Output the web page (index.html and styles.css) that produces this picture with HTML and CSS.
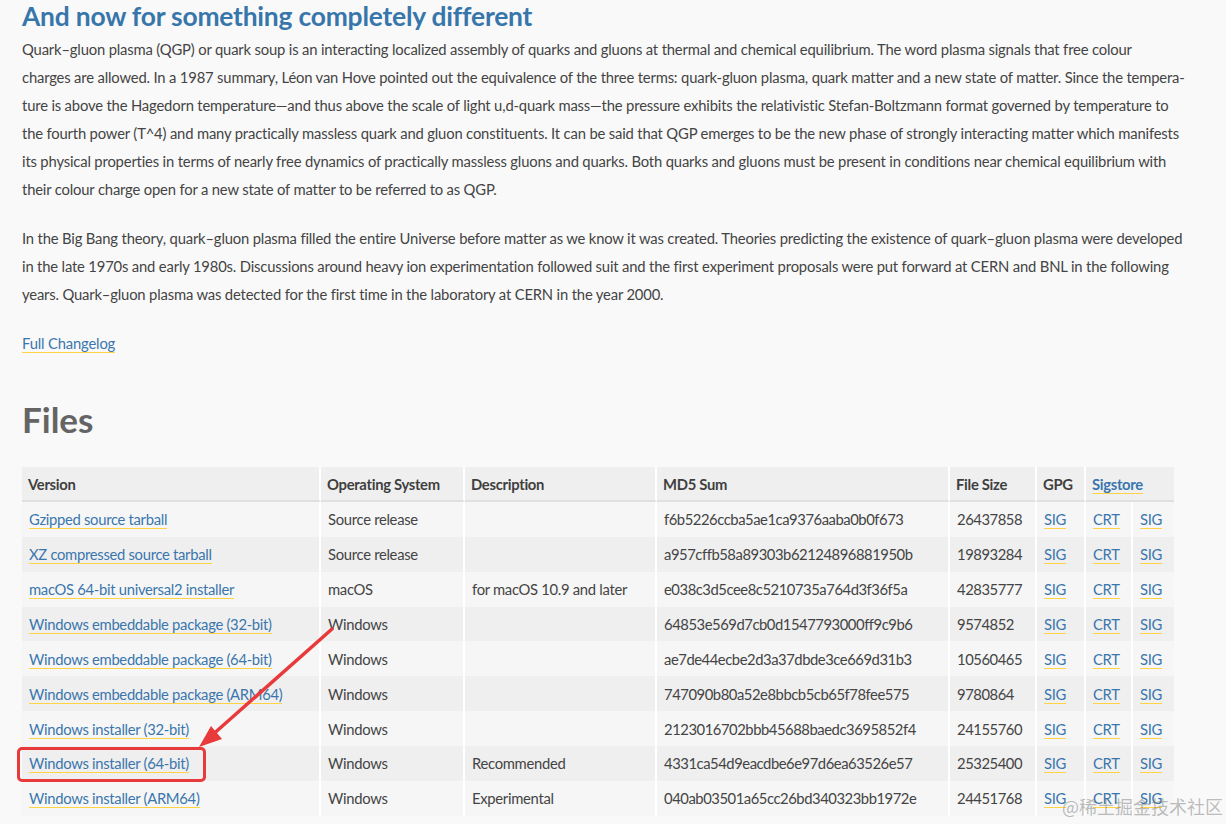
FILE: index.html
```html
<!DOCTYPE html>
<html lang="en">
<head>
<meta charset="utf-8">
<title>Files</title>
<link rel="stylesheet" href="styles.css">
</head>
<body>
<main class="page">
  <h2 class="title">And now for something completely different</h2>
  <p class="text">Quark–gluon plasma (QGP) or quark soup is an interacting localized assembly of quarks and gluons at thermal and chemical equilibrium. The word plasma signals that free colour<br>charges are allowed. In a 1987 summary, Léon van Hove pointed out the equivalence of the three terms: quark-gluon plasma, quark matter and a new state of matter. Since the tempera-<br>ture is above the Hagedorn temperature—and thus above the scale of light u,d-quark mass—the pressure exhibits the relativistic Stefan-Boltzmann format governed by temperature to<br>the fourth power (T^4) and many practically massless quark and gluon constituents. It can be said that QGP emerges to be the new phase of strongly interacting matter which manifests<br>its physical properties in terms of nearly free dynamics of practically massless gluons and quarks. Both quarks and gluons must be present in conditions near chemical equilibrium with<br>their colour charge open for a new state of matter to be referred to as QGP.</p>
  <p class="text">In the Big Bang theory, quark–gluon plasma filled the entire Universe before matter as we know it was created. Theories predicting the existence of quark–gluon plasma were developed<br>in the late 1970s and early 1980s. Discussions around heavy ion experimentation followed suit and the first experiment proposals were put forward at CERN and BNL in the following<br>years. Quark–gluon plasma was detected for the first time in the laboratory at CERN in the year 2000.</p>
  <p class="text"><a class="link" href="#">Full Changelog</a></p>

  <h1 class="files-title">Files</h1>

  <table class="files">
    <colgroup>
      <col class="c-version"><col class="c-os"><col class="c-desc"><col class="c-md5"><col class="c-size"><col class="c-gpg"><col class="c-crt"><col class="c-sig">
    </colgroup>
    <thead>
      <tr><th>Version</th><th>Operating System</th><th>Description</th><th>MD5 Sum</th><th>File Size</th><th>GPG</th><th colspan="2"><a class="link" href="#">Sigstore</a></th></tr>
    </thead>
    <tbody>
      <tr><td><a class="link" href="#">Gzipped source tarball</a></td><td>Source release</td><td></td><td class="mono">f6b5226ccba5ae1ca9376aaba0b0f673</td><td class="mono">26437858</td><td><a class="link" href="#">SIG</a></td><td><a class="link" href="#">CRT</a></td><td><a class="link" href="#">SIG</a></td></tr>
      <tr><td><a class="link" href="#">XZ compressed source tarball</a></td><td>Source release</td><td></td><td class="mono">a957cffb58a89303b62124896881950b</td><td class="mono">19893284</td><td><a class="link" href="#">SIG</a></td><td><a class="link" href="#">CRT</a></td><td><a class="link" href="#">SIG</a></td></tr>
      <tr><td><a class="link" href="#">macOS 64-bit universal2 installer</a></td><td>macOS</td><td>for macOS 10.9 and later</td><td class="mono">e038c3d5cee8c5210735a764d3f36f5a</td><td class="mono">42835777</td><td><a class="link" href="#">SIG</a></td><td><a class="link" href="#">CRT</a></td><td><a class="link" href="#">SIG</a></td></tr>
      <tr><td><a class="link" href="#">Windows embeddable package (32-bit)</a></td><td>Windows</td><td></td><td class="mono">64853e569d7cb0d1547793000ff9c9b6</td><td class="mono">9574852</td><td><a class="link" href="#">SIG</a></td><td><a class="link" href="#">CRT</a></td><td><a class="link" href="#">SIG</a></td></tr>
      <tr><td><a class="link" href="#">Windows embeddable package (64-bit)</a></td><td>Windows</td><td></td><td class="mono">ae7de44ecbe2d3a37dbde3ce669d31b3</td><td class="mono">10560465</td><td><a class="link" href="#">SIG</a></td><td><a class="link" href="#">CRT</a></td><td><a class="link" href="#">SIG</a></td></tr>
      <tr><td><a class="link" href="#">Windows embeddable package (ARM64)</a></td><td>Windows</td><td></td><td class="mono">747090b80a52e8bbcb5cb65f78fee575</td><td class="mono">9780864</td><td><a class="link" href="#">SIG</a></td><td><a class="link" href="#">CRT</a></td><td><a class="link" href="#">SIG</a></td></tr>
      <tr><td><a class="link" href="#">Windows installer (32-bit)</a></td><td>Windows</td><td></td><td class="mono">2123016702bbb45688baedc3695852f4</td><td class="mono">24155760</td><td><a class="link" href="#">SIG</a></td><td><a class="link" href="#">CRT</a></td><td><a class="link" href="#">SIG</a></td></tr>
      <tr><td><a class="link" href="#">Windows installer (64-bit)</a></td><td>Windows</td><td>Recommended</td><td class="mono">4331ca54d9eacdbe6e97d6ea63526e57</td><td class="mono">25325400</td><td><a class="link" href="#">SIG</a></td><td><a class="link" href="#">CRT</a></td><td><a class="link" href="#">SIG</a></td></tr>
      <tr><td><a class="link" href="#">Windows installer (ARM64)</a></td><td>Windows</td><td>Experimental</td><td class="mono">040ab03501a65cc26bd340323bb1972e</td><td class="mono">24451768</td><td><a class="link" href="#">SIG</a></td><td><a class="link" href="#">CRT</a></td><td><a class="link" href="#">SIG</a></td></tr>
    </tbody>
  </table>
</main>

<div class="highlight-box"></div>
<svg class="arrow" width="1226" height="824" viewBox="0 0 1226 824" aria-hidden="true">
  <line x1="332" y1="629" x2="210" y2="737" stroke="#e8393b" stroke-width="3.5" stroke-linecap="round"/>
  <polygon points="199,747 211,726 222,739" fill="#e8393b"/>
</svg>
<div class="watermark">@稀土掘金技术社区</div>
</body>
</html>
```

FILE: styles.css
```css
html, body {
  margin: 0;
  padding: 0;
}
body {
  background: #f9f9f9;
  color: #444;
  font-family: Lato, "Noto Sans", sans-serif;
  width: 1226px;
  height: 824px;
  overflow: hidden;
  position: relative;
}
.page {
  padding-left: 22px;
}
.title {
  margin: 0 0 3px;
  font-size: 26.4px;
  line-height: 32px;
  font-weight: 700;
  color: #3776ab;
  letter-spacing: -0.2px;
}
.text {
  margin: 0 0 21px;
  font-size: 14.8px;
  line-height: 28px;
  white-space: nowrap;
  letter-spacing: -0.17px;
}
.link {
  color: #3a76ad;
  text-decoration: none;
  border-bottom: 1px solid #ffd343;
}
.files-title {
  margin: 38px 0 24px;
  font-size: 35px;
  line-height: 48px;
  font-weight: 700;
  color: #646464;
}
.files {
  border-collapse: separate;
  border-spacing: 0;
  table-layout: fixed;
  width: 1152px;
  font-size: 14.8px;
  letter-spacing: -0.3px;
}
.c-version { width: 299px; }
.c-os { width: 144px; }
.c-desc { width: 192px; }
.c-md5 { width: 293px; }
.c-size { width: 87px; }
.c-gpg { width: 49px; }
.c-crt { width: 47px; }
.c-sig { width: 41px; }
.files th,
.files td {
  border-right: 2px solid #fff;
  padding: 0 0 0 7px;
  text-align: left;
  white-space: nowrap;
  vertical-align: middle;
}
.files th:last-child,
.files td:last-child {
  border-right: 0;
}
.files th {
  height: 33px;
  background: #efefef;
  border-bottom: 2px solid #e0e0e0;
  font-weight: 700;
  color: #3f3f3f;
  padding-left: 6px;
  letter-spacing: -0.3px;
}
.files td {
  height: 34.86px;
}
.files td.mono {
  letter-spacing: -0.45px;
}
.files tbody tr:nth-child(odd) td {
  background: #f6f6f6;
}
.files tbody tr:nth-child(even) td {
  background: #efefef;
}
.highlight-box {
  position: absolute;
  left: 17px;
  top: 747px;
  width: 183px;
  height: 29px;
  border: 3px solid #e8393b;
  border-radius: 5px;
}
.arrow {
  position: absolute;
  left: 0;
  top: 0;
  pointer-events: none;
}
.watermark {
  position: absolute;
  left: 1062px;
  top: 794px;
  font-family: "Noto Sans CJK SC", sans-serif;
  font-size: 18px;
  line-height: 24px;
  color: rgba(110, 110, 110, 0.45);
  white-space: nowrap;
}
```
